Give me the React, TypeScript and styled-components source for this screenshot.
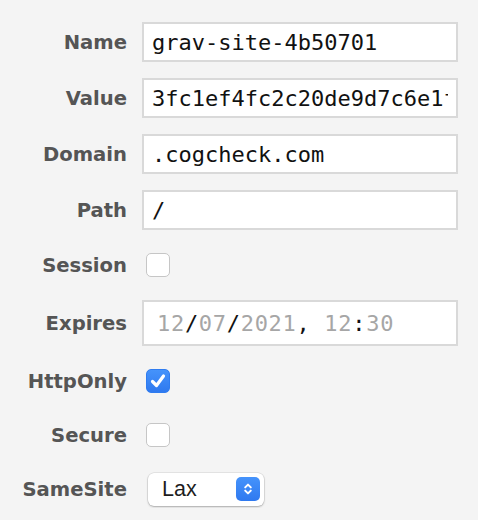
import React from 'react';
import styled, { createGlobalStyle } from 'styled-components';

const GlobalStyle = createGlobalStyle`
  html, body {
    margin: 0;
    padding: 0;
    background: #f4f4f4;
  }
`;

const Form = styled.div`
  display: grid;
  grid-template-columns: 127px 316px;
  column-gap: 15px;
  row-gap: 16px;
  align-items: center;
  padding: 22px 20px 0 0;
`;

const Label = styled.div`
  font-family: 'DejaVu Sans', sans-serif;
  font-weight: bold;
  font-size: 19.6px;
  color: #555555;
  text-align: right;
  white-space: nowrap;
`;

const TextField = styled.input`
  box-sizing: border-box;
  width: 100%;
  height: 40px;
  margin: 0;
  border: 2px solid #d9d9d9;
  background: #ffffff;
  padding: 0 8px;
  font-family: 'DejaVu Sans Mono', monospace;
  font-size: 22px;
  color: #111111;
  outline: none;
`;

const DateField = styled.div`
  box-sizing: border-box;
  height: 46px;
  border: 2px solid #d9d9d9;
  background: #ffffff;
  padding: 0 13px;
  display: flex;
  align-items: center;
  font-family: 'DejaVu Sans Mono', monospace;
  font-size: 22px;
  letter-spacing: 0.7px;
  white-space: pre;
`;

const Part = styled.span<{ $dim?: boolean }>`
  color: ${p => (p.$dim ? '#a6a6a6' : '#111111')};
`;

const CheckCell = styled.div`
  height: 38px;
  display: flex;
  align-items: center;
  padding-left: 4px;
`;

const Box = styled.div<{ $on?: boolean }>`
  box-sizing: border-box;
  width: 24px;
  height: 24px;
  border-radius: 5px;
  display: flex;
  align-items: center;
  justify-content: center;
  border: 1px solid ${p => (p.$on ? '#2f7cf0' : '#c6c6c6')};
  background: ${p => (p.$on ? 'linear-gradient(#4593fb, #2f79ef)' : '#ffffff')};
`;

const SelectCell = styled.div`
  height: 38px;
  display: flex;
  align-items: center;
  padding-left: 6px;
`;

const Select = styled.div`
  box-sizing: border-box;
  width: 116px;
  height: 33px;
  border-radius: 6px;
  background: #ffffff;
  box-shadow: 0 0 0 0.5px rgba(0, 0, 0, 0.12), 0 1px 2px rgba(0, 0, 0, 0.25);
  display: flex;
  align-items: center;
  justify-content: space-between;
  padding: 0 4px 0 14px;
  font-family: 'Liberation Sans', Arial, sans-serif;
  font-size: 21.5px;
  color: #1d1d1d;
`;

const Stepper = styled.div`
  width: 24px;
  height: 24px;
  border-radius: 5px;
  background: linear-gradient(#4593fb, #2f79ef);
  display: flex;
  align-items: center;
  justify-content: center;
`;

const Check = () => (
  <svg width="20" height="20" viewBox="0 0 20 20">
    <path d="M4.5 10.5 L8.5 14.5 L15.5 5" fill="none" stroke="#fff" strokeWidth="3.2" strokeLinecap="round" strokeLinejoin="round" />
  </svg>
);

const Chevrons = () => (
  <svg width="12" height="18" viewBox="0 0 12 18">
    <path d="M3.2 7.4 L6 4.6 L8.8 7.4 M3.2 10.6 L6 13.4 L8.8 10.6" fill="none" stroke="#fff" strokeWidth="2" strokeLinecap="round" strokeLinejoin="round" />
  </svg>
);

const CheckRow = ({ label, on }: { label: string; on?: boolean }) => (
  <>
    <Label>{label}</Label>
    <CheckCell>
      <Box $on={on}>{on && <Check />}</Box>
    </CheckCell>
  </>
);

export default function App() {
  return (
    <>
      <GlobalStyle />
      <Form>
        <Label>Name</Label>
        <TextField readOnly value="grav-site-4b50701" />

        <Label>Value</Label>
        <TextField readOnly value="3fc1ef4fc2c20de9d7c6e1f5a2b8" />

        <Label>Domain</Label>
        <TextField readOnly value=".cogcheck.com" />

        <Label>Path</Label>
        <TextField readOnly value="/" />

        <CheckRow label="Session" />

        <Label>Expires</Label>
        <DateField>
          <Part $dim>12</Part>
          <Part>/</Part>
          <Part $dim>07</Part>
          <Part>/</Part>
          <Part $dim>2021</Part>
          <Part>, </Part>
          <Part $dim>12</Part>
          <Part>:</Part>
          <Part $dim>30</Part>
        </DateField>

        <CheckRow label="HttpOnly" on />
        <CheckRow label="Secure" />

        <Label>SameSite</Label>
        <SelectCell>
          <Select>
            <span>Lax</span>
            <Stepper>
              <Chevrons />
            </Stepper>
          </Select>
        </SelectCell>
      </Form>
    </>
  );
}
